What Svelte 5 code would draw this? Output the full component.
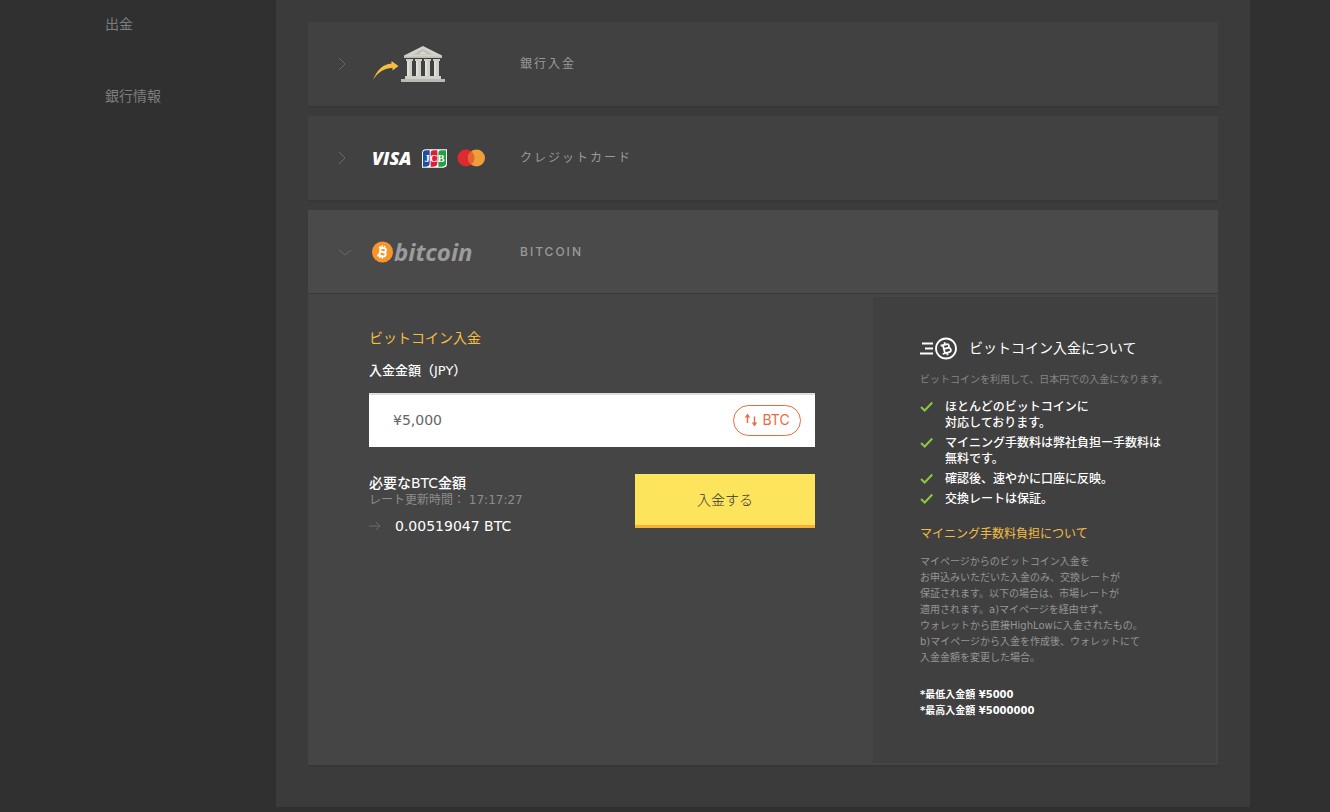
<script lang="ts">
  // Deposit page: account links on the left, payment methods as an accordion,
  // with the bitcoin method opened.
  const links = ['出金', '銀行情報'];

  const points = [
    ['ほとんどのビットコインに', '対応しております。'],
    ['マイニング手数料は弊社負担ー手数料は', '無料です。'],
    ['確認後、速やかに口座に反映。'],
    ['交換レートは保証。'],
  ];

  const terms = [
    'マイページからのビットコイン入金を',
    'お申込みいただいた入金のみ、交換レートが',
    '保証されます。以下の場合は、市場レートが',
    '適用されます。a)マイページを経由せず、',
    'ウォレットから直接HighLowに入金されたもの。',
    'b)マイページから入金を作成後、ウォレットにて',
    '入金金額を変更した場合。',
  ];

  let amount = $state('¥5,000');
</script>

{#snippet chevron(open: boolean)}
  <svg class="chevron" width="14" height="14" viewBox="0 0 14 14" aria-hidden="true">
    <path d={open ? 'M1 5l6 5 6-5' : 'M1 1l6 6-6 6'} />
  </svg>
{/snippet}

<div class="page">
  <nav class="sidebar">
    {#each links as link}
      <a href="#{link}">{link}</a>
    {/each}
  </nav>

  <main class="content">
    <section class="method">
      <button class="head" type="button" aria-expanded="false">
        {@render chevron(false)}
        <span class="logos">
          <svg width="76" height="38" viewBox="0 0 76 38" aria-hidden="true">
            <path
              fill="#f6bd45"
              d="M1 35C5 25 11 19 19.500 18.500V16l7 5-6 4.500v-2.700C12.500 23.500 6 27 1 35z"
            />
            <path fill="#d3d3cc" d="M51 1l19 9.500V13H32v-2.500z" />
            <path fill="#bdbdb5" d="M51 4l10 5.500H41zM32 11.500h38V13H32z" />
            <path fill="#dadad4" d="M51 6l4 3h-8z" />
            <g fill="#d0d0c9">
              <path d="M34 14h7v2h-7zM43 14h7v2h-7zM52 14h7v2h-7zM61 14h7v2h-7z" />
              <path d="M35 16h5v15h-5zM44 16h5v15h-5zM53 16h5v15h-5zM62 16h5v15h-5z" />
              <path d="M33 31h36v3H33z" />
            </g>
            <path fill="#e0e0da" d="M35 16h2v15h-2zM44 16h2v15h-2zM53 16h2v15h-2zM62 16h2v15h-2z" />
            <path fill="#b9bab3" d="M29 34h44v3H29z" />
          </svg>
        </span>
        <span class="name">銀行入金</span>
      </button>
    </section>

    <section class="method">
      <button class="head" type="button" aria-expanded="false">
        {@render chevron(false)}
        <span class="logos">
          <span class="visa">VISA</span>
          <svg width="25" height="19" viewBox="0 0 26 19" aria-label="JCB">
            <path fill="#fff" d="M4 0h22v15a4 4 0 0 1-4 4H0V4a4 4 0 0 1 4-4z" />
            <path fill="#1c4fa1" d="M4 1h4v13a4 4 0 0 1-4 4H1V4a3 3 0 0 1 3-3z" />
            <path fill="#d9203a" d="M12 1h4v13a4 4 0 0 1-4 4H9V4a3 3 0 0 1 3-3z" />
            <path fill="#23a047" d="M20 1h5v13a4 4 0 0 1-4 4h-4V4a3 3 0 0 1 3-3z" />
            <text class="jcb" x="13" y="13" text-anchor="middle">JCB</text>
          </svg>
          <svg width="28" height="18" viewBox="0 0 28 18" aria-label="Mastercard">
            <circle cx="9" cy="9" r="8.500" fill="#dc2a30" />
            <circle cx="19.500" cy="9" r="8.500" fill="#f09e3b" />
            <path fill="#e8642f" d="M14.200 2.300a8.500 8.500 0 0 1 0 13.400 8.500 8.500 0 0 1 0-13.400z" />
          </svg>
        </span>
        <span class="name">クレジットカード</span>
      </button>
    </section>

    <section class="method open">
      <button class="head" type="button" aria-expanded="true">
        {@render chevron(true)}
        <span class="logos bitcoin">
          <svg width="21" height="22" viewBox="0 0 21 22" aria-hidden="true">
            <circle cx="10.500" cy="11" r="10.500" fill="#f9942b" />
            <g transform="rotate(12 10.500 11)" fill="none" stroke="#fff" stroke-width="2">
              <path d="M6 7h5.500a2 2 0 0 1 0 4H8h4a2.100 2.100 0 0 1 0 4.200H6M8 7v8" />
              <path stroke-width="1.400" d="M9 4.500V7M11.500 4.500V7M9 15v2.500M11.500 15v2.500" />
            </g>
          </svg>
          <span class="wordmark">bitcoin</span>
        </span>
        <span class="name latin">BITCOIN</span>
      </button>

      <div class="body">
        <form class="form" onsubmit={(e) => e.preventDefault()}>
          <h2>ビットコイン入金</h2>
          <label for="amount">入金金額（JPY）</label>
          <div class="field">
            <input id="amount" type="text" bind:value={amount} />
            <button class="swap" type="button">
              <svg width="14" height="14" viewBox="0 0 14 14" aria-hidden="true">
                <path d="M3.500 10V3M10.500 3.500V11" stroke="currentColor" stroke-width="1.400" />
                <path d="M3.500 0.500L6.200 4.500H.8zM10.500 13.500L7.800 9.500h5.400z" fill="currentColor" />
              </svg>
              BTC
            </button>
          </div>
          <div class="summary">
            <div>
              <p class="need">必要なBTC金額</p>
              <p class="rate">レート更新時間： 17:17:27</p>
              <p class="total">
                <svg width="12" height="10" viewBox="0 0 12 10" aria-hidden="true">
                  <path d="M0 5h11M7 1l4 4-4 4" fill="none" stroke="#6a6a6a" />
                </svg>
                0.00519047 BTC
              </p>
            </div>
            <button class="submit" type="submit">入金する</button>
          </div>
        </form>

        <aside class="info">
          <h3>
            <svg width="38" height="24" viewBox="0 0 38 24" aria-hidden="true">
              <g fill="none" stroke="#fff" stroke-width="1.800">
                <path d="M2 7.500h11M5 12.500h8M0 17.500h13" />
                <circle cx="26" cy="12.500" r="10" />
                <g transform="rotate(-14 26 12.500)">
                  <path d="M21.500 8.500h6a2 2 0 0 1 0 4H24h4.200a2.200 2.200 0 0 1 0 4.400h-6.700M23.800 8.500v8.400" />
                  <path d="M26 6v2.500M26 17v2.500" />
                </g>
              </g>
            </svg>
            ビットコイン入金について
          </h3>
          <p class="lead">ビットコインを利用して、日本円での入金になります。</p>
          <ul>
            {#each points as lines}
              <li>
                <svg width="13" height="16" viewBox="0 0 13 16" aria-hidden="true">
                  <path d="M1 8l3.700 3.500L12.300 3.500" fill="none" stroke="#8dc63f" stroke-width="2" />
                </svg>
                <span>
                  {#each lines as line}<span class="line">{line}</span>{/each}
                </span>
              </li>
            {/each}
          </ul>
          <h4>マイニング手数料負担について</h4>
          <p class="terms">
            {#each terms as line}<span class="line">{line}</span>{/each}
          </p>
          <p class="limits">
            <span class="line">*最低入金額 ¥5000</span>
            <span class="line">*最高入金額 ¥5000000</span>
          </p>
        </aside>
      </div>
    </section>
  </main>
</div>

<style>
  :global(body) {
    background: #303030;
  }
  .page {
    display: flex;
    align-items: flex-start;
    padding-right: 80px;
    color: #fff;
    font-family: 'DejaVu Sans', 'Noto Sans CJK JP', sans-serif;
    font-size: 14px;
    line-height: 20px;
  }
  .page * {
    box-sizing: border-box;
  }
  h2,
  h3,
  h4,
  p,
  ul {
    margin: 0;
    padding: 0;
    font-weight: 400;
  }
  button,
  input {
    font: inherit;
    border: 0;
    border-radius: 0;
  }
  button {
    cursor: pointer;
  }
  svg {
    flex: none;
  }
  .line {
    display: block;
    white-space: nowrap;
  }

  .sidebar {
    flex: none;
    width: 276px;
    display: flex;
    flex-direction: column;
    gap: 52px;
    padding: 14px 0 0 105px;
  }
  .sidebar a {
    color: #7d7d7d;
    text-decoration: none;
  }

  .content {
    flex: 1;
    min-width: 0;
    display: flex;
    flex-direction: column;
    gap: 10px;
    padding: 22px 32px 42px;
    background: #3b3b3b;
  }
  .method {
    background: #414141;
    box-shadow: 0 2px 0 #373737;
  }
  .method.open {
    background: #454545;
  }
  .head {
    width: 100%;
    height: 84px;
    display: grid;
    grid-template-columns: 34px 148px 1fr;
    align-items: center;
    padding: 0 30px;
    background: none;
    text-align: left;
  }
  .open .head {
    background: #4a4a4a;
    border-bottom: 1px solid #383838;
  }
  .chevron path {
    fill: none;
    stroke: #6a6a6a;
  }
  .logos {
    display: flex;
    align-items: center;
    gap: 10px;
  }
  .visa {
    color: #fff;
    font: italic 800 18px/20px 'Open Sans', sans-serif;
  }
  .jcb {
    fill: #fff;
    font: 700 11px 'Liberation Serif', serif;
  }
  .bitcoin {
    gap: 1px;
  }
  .wordmark {
    color: #9c9c9c;
    font: italic 700 24px/28px 'Open Sans', sans-serif;
  }
  .name {
    color: #9a9a9a;
    font-size: 12px;
    letter-spacing: 2px;
  }
  .latin {
    font-family: Inter, sans-serif;
    font-weight: 500;
  }

  .body {
    display: flex;
    align-items: stretch;
    padding: 3px 2px 2px 0;
  }
  .form {
    flex: 1;
    min-width: 0;
    padding: 31px 58px 31px 61px;
  }
  h2 {
    color: #f4bd42;
    font-size: 14px;
  }
  label {
    display: block;
    margin: 13px 0 12px;
    font-size: 13px;
    font-weight: 500;
  }
  .field {
    display: flex;
    align-items: center;
    height: 54px;
    padding: 0 14px 2px 24px;
    background: #fff;
    border-top: 2px solid #dedede;
  }
  .field input {
    flex: 1;
    min-width: 0;
    padding: 0;
    color: #666;
    background: none;
    outline: 0;
  }
  .swap {
    display: flex;
    align-items: center;
    justify-content: center;
    gap: 4px;
    width: 68px;
    height: 31px;
    padding: 0;
    color: #f0683c;
    background: #fff;
    border: 1px solid #f0683c;
    border-radius: 16px;
    font-family: Inter, sans-serif;
  }
  .summary {
    display: flex;
    align-items: flex-start;
    justify-content: space-between;
    margin-top: 27px;
  }
  .need {
    font-weight: 500;
    line-height: 18px;
  }
  .rate {
    color: #8c8c8c;
    font-size: 12px;
    line-height: 16px;
  }
  .total {
    display: flex;
    align-items: center;
    gap: 14px;
    margin-top: 9px;
    line-height: 18px;
  }
  .submit {
    width: 180px;
    height: 54px;
    color: #333;
    background: #fce45c;
    border-bottom: 3px solid #fbb034;
    font-weight: 300;
  }

  .info {
    flex: none;
    width: 343px;
    padding: 39px 0 44px 47px;
    background: #404040;
    font-size: 12px;
    line-height: 16px;
  }
  h3 {
    display: flex;
    align-items: center;
    gap: 11px;
    font-size: 14px;
    line-height: 24px;
  }
  .lead {
    margin: 12px 0 11px;
    color: #858585;
    font-size: 10px;
  }
  ul {
    display: flex;
    flex-direction: column;
    gap: 4px;
    list-style: none;
  }
  li {
    display: flex;
    gap: 12px;
    font-weight: 500;
  }
  h4 {
    margin: 19px 0 12px;
    color: #f4bd42;
    font-size: 12px;
  }
  .terms {
    color: #959595;
    font-size: 10px;
  }
  .limits {
    margin-top: 21px;
    font-size: 10px;
    font-weight: 700;
  }
</style>
